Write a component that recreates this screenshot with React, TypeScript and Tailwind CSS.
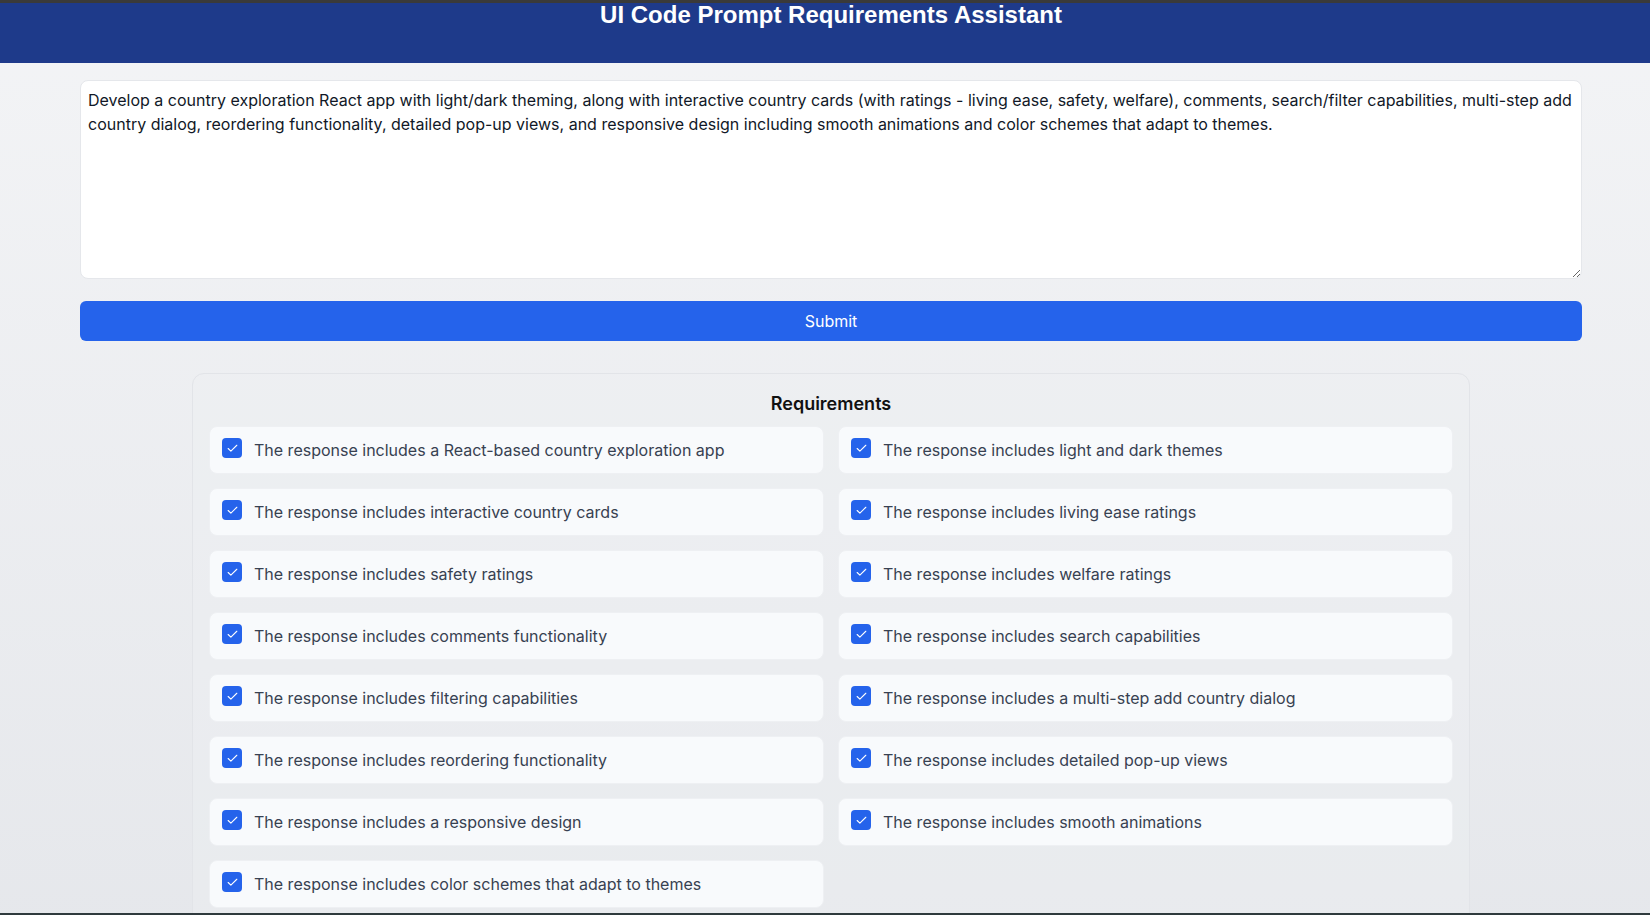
import { Check } from 'lucide-react'

const prompt =
  'Develop a country exploration React app with light/dark theming, along with interactive country cards (with ratings - living ease, safety, welfare), comments, search/filter capabilities, multi-step add country dialog, reordering functionality, detailed pop-up views, and responsive design including smooth animations and color schemes that adapt to themes.'

const requirements = [
  'The response includes a React-based country exploration app',
  'The response includes light and dark themes',
  'The response includes interactive country cards',
  'The response includes living ease ratings',
  'The response includes safety ratings',
  'The response includes welfare ratings',
  'The response includes comments functionality',
  'The response includes search capabilities',
  'The response includes filtering capabilities',
  'The response includes a multi-step add country dialog',
  'The response includes reordering functionality',
  'The response includes detailed pop-up views',
  'The response includes a responsive design',
  'The response includes smooth animations',
  'The response includes color schemes that adapt to themes',
]

function RequirementItem({ text }: { text: string }) {
  return (
    <div className="flex items-start gap-3 px-3 py-[11px] bg-[#f8fafc] border border-[#eef0f3] rounded-lg">
      <span className="flex items-center justify-center w-5 h-5 shrink-0 rounded bg-[#2563eb]">
        <Check size={13} strokeWidth={2} color="#ffffff" />
      </span>
      <span className="text-base leading-6 text-[#374151]">{text}</span>
    </div>
  )
}

export default function App() {
  return (
    <div className="min-h-screen overflow-hidden bg-gradient-to-b from-[#f3f4f6] to-[#e5e7eb] font-['Inter','Noto_Sans',sans-serif]">
      <div className="h-[3px] bg-[#3a3a3a]" />
      <header className="h-[60px] bg-[#1e3a8a] pl-[12px]">
        <h1 className="text-center text-2xl leading-[24px] font-bold text-white font-['Liberation_Sans',Arial,sans-serif]">
          UI Code Prompt Requirements Assistant
        </h1>
      </header>

      <main className="pl-[80px] pr-[68px] pt-[17px] pb-10">
        <textarea
          defaultValue={prompt}
          className="block w-full h-[199px] p-[7px] text-base leading-6 text-[#111827] bg-white border border-[#e5e7eb] rounded-lg focus:outline-none"
        />
        <button className="mt-[22px] w-full h-10 rounded-md bg-[#2563eb] text-white text-base">
          Submit
        </button>

        <section className="mt-8 mx-auto w-[1278px] p-4 border border-[#e2e4e8] rounded-xl bg-[#eef0f3]/40">
          <h2 className="text-center text-lg leading-7 font-semibold text-[#111111] mb-2">
            Requirements
          </h2>
          <div className="grid grid-cols-2 gap-x-[14px] gap-y-[14px]">
            {requirements.map((r) => (
              <RequirementItem key={r} text={r} />
            ))}
          </div>
        </section>
      </main>

      <div className="fixed bottom-0 left-0 right-0 h-[2px] bg-[#2f3a3d]" />
    </div>
  )
}
